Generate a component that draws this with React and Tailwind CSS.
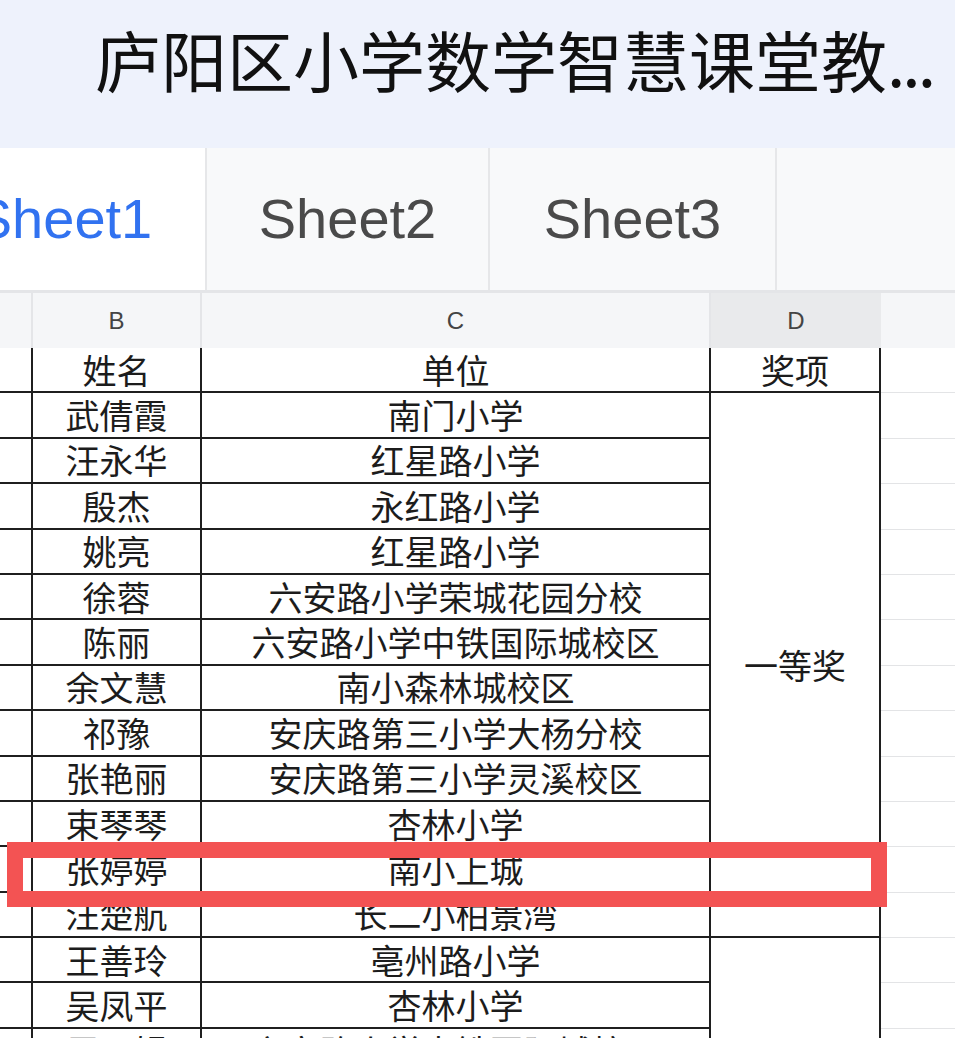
import React from 'react';

const cjk = { fontFamily: '"Noto Sans CJK SC", "Noto Sans", sans-serif' };
const latin = { fontFamily: '"Liberation Sans", Arial, sans-serif' };

// rows of the sheet: [name, school]
const rows = [
  ['武倩霞', '南门小学'],
  ['汪永华', '红星路小学'],
  ['殷杰', '永红路小学'],
  ['姚亮', '红星路小学'],
  ['徐蓉', '六安路小学荣城花园分校'],
  ['陈丽', '六安路小学中铁国际城校区'],
  ['余文慧', '南小森林城校区'],
  ['祁豫', '安庆路第三小学大杨分校'],
  ['张艳丽', '安庆路第三小学灵溪校区'],
  ['束琴琴', '杏林小学'],
  ['张婷婷', '南小上城'],
  ['汪楚航', '长二小柏景湾'],
  ['王善玲', '亳州路小学'],
  ['吴凤平', '杏林小学'],
  ['周丽娟', '六安路小学中铁国际城校区'],
];

const Tab = ({ label, active, width }) => (
  <div
    className={`flex items-center justify-center shrink-0 border-r-2 border-[#e6e7e9] ${
      active ? 'bg-white text-[#3172f0]' : 'text-[#4a4a4a]'
    } ${width}`}
  >
    <span className="text-[56px] leading-none" style={latin}>{label}</span>
  </div>
);

const App = () => {
  return (
    <div className="w-[955px] h-[1038px] overflow-hidden bg-white relative text-[#1e1e1e]" style={cjk}>
      {/* title */}
      <div className="h-[148px] bg-[#eef2fc] flex items-center pl-[95px] pb-[32px]">
        <h1 className="text-[66px] leading-none font-normal whitespace-nowrap text-[#111]">
          庐阳区小学数学智慧课堂教<span className="tracking-[-3px]">...</span>
        </h1>
      </div>

      {/* sheet tabs, scrolled a bit to the left */}
      <div className="h-[145px] bg-[#f8f9fa] border-b-[3px] border-[#e4e5e8] flex overflow-hidden">
        <div className="flex -ml-[78px]">
          <Tab label="Sheet1" active width="w-[285px]" />
          <Tab label="Sheet2" width="w-[283px]" />
          <Tab label="Sheet3" width="w-[287px]" />
        </div>
      </div>

      {/* column letters */}
      <div className="grid grid-cols-[33px_169px_509px_170px_1fr] h-[55px] bg-[#f5f6f8] text-[24px] text-[#444]" style={latin}>
        <div className="border-r-2 border-[#e4e5e8]" />
        <div className="border-r-2 border-[#e4e5e8] flex items-center justify-center">B</div>
        <div className="border-r-2 border-[#e4e5e8] flex items-center justify-center">C</div>
        <div className="bg-[#e9eaec] flex items-center justify-center">D</div>
        <div />
      </div>

      {/* cells */}
      <div className="grid grid-cols-[33px_169px_509px_170px_1fr] auto-rows-[45.4px] text-[34px] leading-none text-[#1c1c1c]">
        <div className="border-r-2 border-b-2 border-[#1f1f1f]" />
        <div className="border-r-2 border-b-2 border-[#1f1f1f] flex items-center justify-center">姓名</div>
        <div className="border-r-2 border-b-2 border-[#1f1f1f] flex items-center justify-center">单位</div>
        <div className="border-r-2 border-b-2 border-[#1f1f1f] flex items-center justify-center">奖项</div>
        <div className="border-b border-[#e3e4e6]" />

        {rows.map(([name, school], i) => (
          <React.Fragment key={name}>
            <div className="border-r-2 border-b-2 border-[#1f1f1f]" style={{ gridColumn: 1, gridRow: i + 2 }} />
            <div
              className="border-r-2 border-b-2 border-[#1f1f1f] flex items-center justify-center whitespace-nowrap"
              style={{ gridColumn: 2, gridRow: i + 2 }}
            >
              {name}
            </div>
            <div
              className="border-r-2 border-b-2 border-[#1f1f1f] flex items-center justify-center whitespace-nowrap"
              style={{ gridColumn: 3, gridRow: i + 2 }}
            >
              {school}
            </div>
            <div className="border-b border-[#e3e4e6]" style={{ gridColumn: 5, gridRow: i + 2 }} />
          </React.Fragment>
        ))}

        {/* merged award cells */}
        <div className="col-start-4 row-start-2 row-span-12 border-r-2 border-b-2 border-[#1f1f1f] flex items-center justify-center">
          一等奖
        </div>
        <div className="col-start-4 row-start-14 row-span-3 border-r-2 border-[#1f1f1f]" />
      </div>

      {/* highlight frame drawn over the sheet */}
      <div className="absolute left-[7px] top-[842px] w-[880px] h-[65px] border-[16px] border-[#f35353] pointer-events-none" />
    </div>
  );
};

export default App;
